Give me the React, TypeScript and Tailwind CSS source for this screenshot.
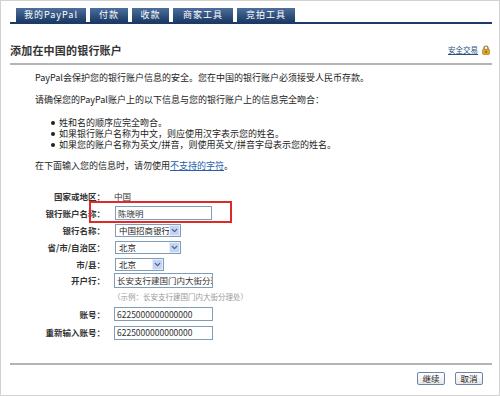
import { ChevronDown } from "lucide-react";

const tabs = [
  { label: "我的PayPal", w: "w-[70px]" },
  { label: "付款", w: "w-[38px]" },
  { label: "收款", w: "w-[37px]" },
  { label: "商家工具", w: "w-[60px]" },
  { label: "竞拍工具", w: "w-[58px]" },
];

function Lock() {
  return (
    <svg width="8" height="10" viewBox="0 0 8 10">
      <path d="M2 4.5V3a2 2 0 0 1 4 0v1.5" fill="none" stroke="#8a6a1a" strokeWidth="1.2" />
      <rect x="0.5" y="4.3" width="7" height="5.2" rx="1" fill="#e0a526" stroke="#9a6e12" strokeWidth="0.6" />
      <rect x="3.4" y="5.8" width="1.2" height="2.2" fill="#7a5210" />
    </svg>
  );
}

function Select({ value, w }: { value: string; w: string }) {
  return (
    <div className={`${w} h-[13px] flex border border-[#7f9db9] bg-white`}>
      <span className="flex-1 pl-[3px] text-[8.5px] leading-[11px] text-[#222] whitespace-nowrap overflow-hidden">
        {value}
      </span>
      <span className="w-[11px] h-full flex items-center justify-center bg-[#c3d5f2] border border-[#e6eefb]">
        <ChevronDown size={9} strokeWidth={3.5} color="#4a5f8a" />
      </span>
    </div>
  );
}

function Field({ value, w, h }: { value: string; w: string; h: string }) {
  return (
    <div
      className={`${w} ${h} flex items-center border border-[#7f9db9] bg-white pl-[2px] text-[8.5px] text-[#333] whitespace-nowrap overflow-hidden`}
    >
      {value}
    </div>
  );
}

function Label({ children }: { children: string }) {
  return (
    <span className="w-[95px] text-right text-[8.5px] font-bold text-[#333] whitespace-nowrap">
      {children}
    </span>
  );
}

export default function App() {
  return (
    <div className="w-[500px] h-[396px] border border-[#d2d2d2] bg-white pt-[7px] pl-[9px] pr-[7px] font-['Noto_Sans_CJK_SC',sans-serif] text-[#333]">
      {/* tabs */}
      <div className="flex items-end h-[14px] pl-[6px] gap-[4px]">
        {tabs.map((t) => (
          <div
            key={t.label}
            className={`${t.w} h-[14px] flex items-center justify-center bg-gradient-to-b from-[#4d6f9c] to-[#1c3b66] text-white text-[9px] tracking-[1px] whitespace-nowrap`}
          >
            {t.label}
          </div>
        ))}
      </div>
      <div className="h-[2px] bg-[#1c3a66]" />

      {/* header */}
      <div className="mt-[18px] h-[16px] flex items-center justify-between pr-[2px]">
        <h1 className="text-[11px] font-bold text-[#333] tracking-[0.2px]">添加在中国的银行账户</h1>
        <div className="flex items-center gap-[4px]">
          <span className="text-[7.5px] text-[#2b4f85] underline">安全交易</span>
          <Lock />
        </div>
      </div>
      <div className="mt-[5px] h-[2px] bg-[#b4b4b4]" />

      {/* intro */}
      <div className="pl-[25px] text-[9px] leading-[12px] text-[#222]">
        <p className="mt-[7px]">PayPal会保护您的银行账户信息的安全。您在中国的银行账户必须接受人民币存款。</p>
        <p className="mt-[10px]">请确保您的PayPal账户上的以下信息与您的银行账户上的信息完全吻合：</p>
        <ul className="mt-[11px] pl-[16px] leading-[11px]">
          {[
            "姓和名的顺序应完全吻合。",
            "如果银行账户名称为中文，则应使用汉字表示您的姓名。",
            "如果您的账户名称为英文/拼音，则使用英文/拼音字母表示您的姓名。",
          ].map((b) => (
            <li key={b} className="flex items-center gap-[4px]">
              <span className="w-[4px] h-[4px] rounded-full bg-[#222]" />
              {b}
            </li>
          ))}
        </ul>
        <p className="mt-[10px]">
          在下面输入您的信息时，请勿使用
          <span className="text-[#2a5ea8] underline">不支持的字符</span>。
        </p>
      </div>

      {/* form */}
      <div className="mt-[16px] flex flex-col">
        <div className="h-[16px] flex items-center gap-[9px]">
          <Label>国家或地区：</Label>
          <span className="text-[8.5px] text-[#333]">中国</span>
        </div>
        <div className="relative h-[18px] flex items-center gap-[10px]">
          <Label>银行账户名称：</Label>
          <Field value="陈晓明" w="w-[97px]" h="h-[14px]" />
          <div className="absolute left-[79px] top-[-3px] w-[143px] h-[22px] border-2 border-[#e02a2a]" />
        </div>
        <div className="h-[17px] flex items-center gap-[10px]">
          <Label>银行名称：</Label>
          <Select value="中国招商银行" w="w-[66px]" />
        </div>
        <div className="h-[17px] flex items-center gap-[10px]">
          <Label>省/市/自治区：</Label>
          <Select value="北京" w="w-[66px]" />
        </div>
        <div className="h-[16px] flex items-center gap-[10px]">
          <Label>市/县：</Label>
          <Select value="北京" w="w-[49px]" />
        </div>
        <div className="h-[17px] flex items-center gap-[9px]">
          <Label>开户行：</Label>
          <Field value="长安支行建国门内大街分理处" w="w-[99px]" h="h-[15px]" />
        </div>
        <div className="h-[16px] flex items-center pl-[103px] text-[7.5px] text-[#999] whitespace-nowrap">
          （示例：长安支行建国门内大街分理处）
        </div>
        <div className="h-[18px] flex items-center gap-[9px]">
          <Label>账号：</Label>
          <Field value="6225000000000000" w="w-[99px]" h="h-[14px]" />
        </div>
        <div className="h-[19px] flex items-center gap-[9px]">
          <Label>重新输入账号：</Label>
          <Field value="6225000000000000" w="w-[99px]" h="h-[14px]" />
        </div>
      </div>

      <div className="mt-[21px] h-[2px] bg-[#b4b4b4]" />
      <div className="mt-[7px] flex justify-end gap-[10px] pr-[9px]">
        {["继续", "取消"].map((b) => (
          <button
            key={b}
            className="w-[28px] h-[13px] flex items-center justify-center rounded-[2px] border border-[#6b84a8] bg-gradient-to-b from-white to-[#e8e8e8] text-[8.5px] text-[#222]"
          >
            {b}
          </button>
        ))}
      </div>
    </div>
  );
}
